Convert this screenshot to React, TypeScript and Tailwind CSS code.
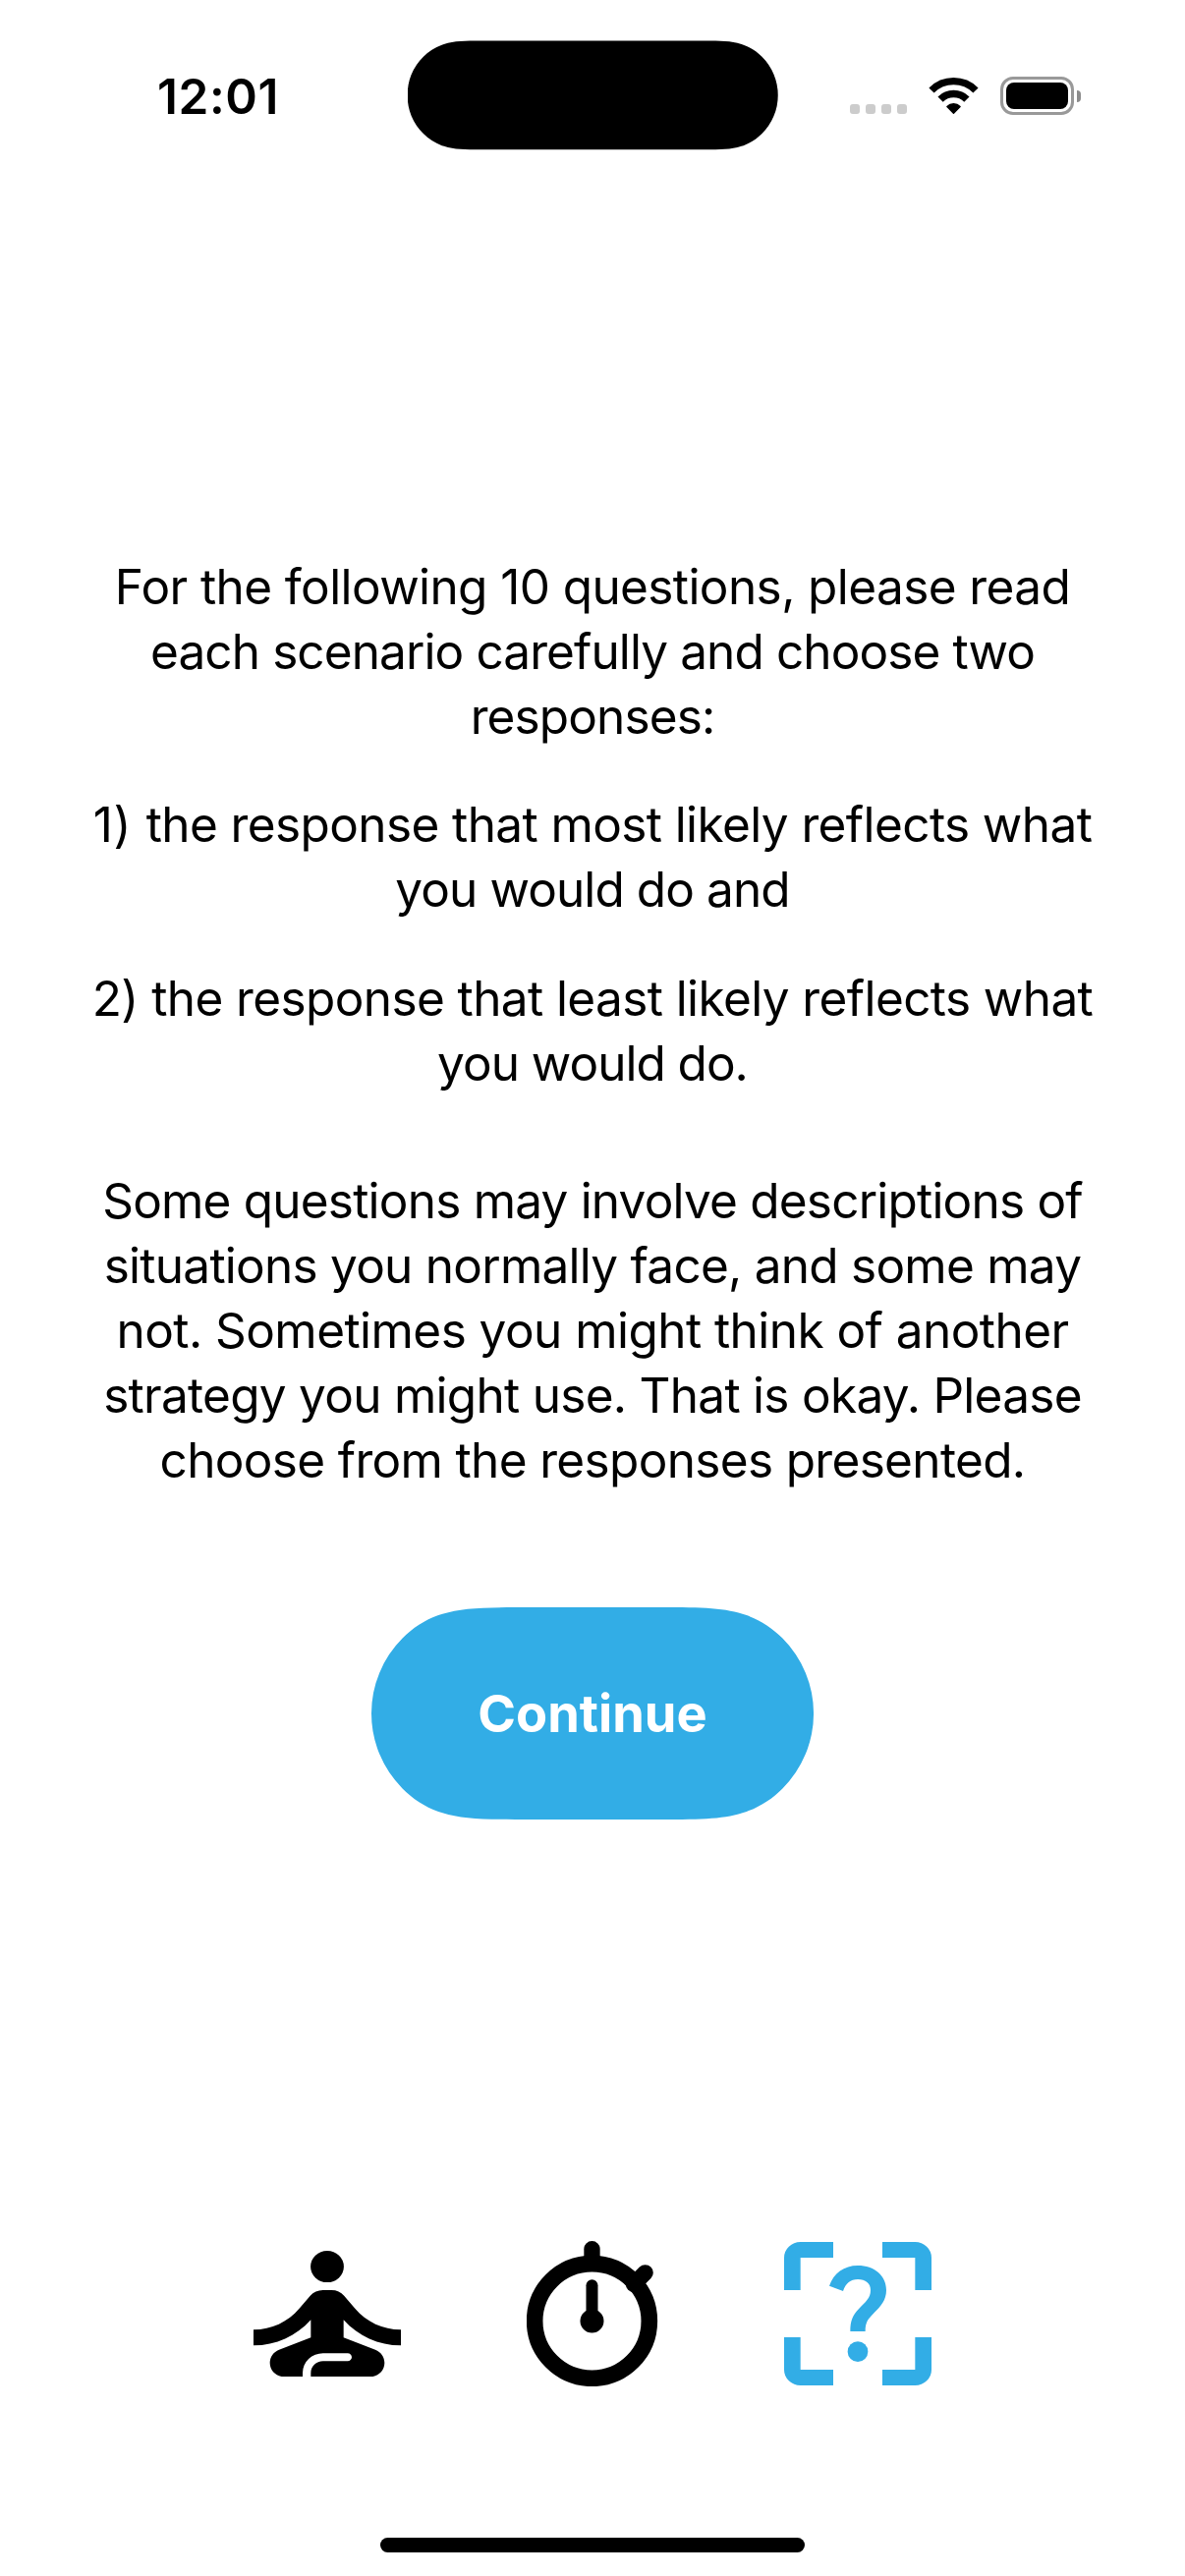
type Line = { text: string; tracking: string; marker?: string };

const INTRO: Line[] = [
  { text: "For the following 10 questions, please read", tracking: "tracking-[-0.595px]" },
  { text: "each scenario carefully and choose two", tracking: "tracking-[-0.895px]" },
  { text: "responses:", tracking: "tracking-[-0.87px]" },
];

const MOST: Line[] = [
  { marker: "1) ", text: "the response that most likely reflects what", tracking: "tracking-[-0.6px]" },
  { text: "you would do and", tracking: "tracking-[-0.9px]" },
];

const LEAST: Line[] = [
  { text: "2) the response that least likely reflects what", tracking: "tracking-[-0.6px]" },
  { text: "you would do.", tracking: "tracking-[-1px]" },
];

const NOTE: Line[] = [
  { text: "Some questions may involve descriptions of", tracking: "tracking-[-0.79px]" },
  { text: "situations you normally face, and some may", tracking: "tracking-[-0.746px]" },
  { text: "not. Sometimes you might think of another", tracking: "tracking-[-0.55px]" },
  { text: "strategy you might use. That is okay. Please", tracking: "tracking-[-0.72px]" },
  { text: "choose from the responses presented.", tracking: "tracking-[-0.66px]" },
];

function Paragraph({ lines, className = "" }: { lines: Line[]; className?: string }) {
  return (
    <p className={`text-center text-[49.5px] leading-[66px] whitespace-nowrap ${className}`}>
      {lines.map((line) => (
        <span key={line.text} className={`block ${line.tracking}`}>
          {line.marker && <span className="tracking-[0.6px]">{line.marker}</span>}
          {line.text}
        </span>
      ))}
    </p>
  );
}

function WifiIcon() {
  return (
    <svg className="h-[38px] w-[52px]" viewBox="-0.5 0 52 38" fill="none">
      <path d="M2.5 13 A31.85 31.85 0 0 1 47.5 13" stroke="#000" strokeWidth="7.3" />
      <path d="M11.6 22.1 A19 19 0 0 1 38.4 22.1" stroke="#000" strokeWidth="7.5" />
      <path
        d="M25 36.2 L18.4 29.5 A9.4 9.4 0 0 1 31.6 29.5 Z"
        fill="#000"
        stroke="#000"
        strokeWidth="1.4"
        strokeLinejoin="round"
      />
    </svg>
  );
}

function BatteryIcon() {
  return (
    <div className="flex items-center gap-[3px]">
      <div className="h-[39px] w-[75px] rounded-[13px] border-[3px] border-[#999] p-[3px]">
        <div className="h-full w-full rounded-[8px] bg-black" />
      </div>
      <div className="h-[12px] w-[4px] rounded-r-full bg-[#8c8c8c]" />
    </div>
  );
}

function StatusBar() {
  return (
    <header className="relative flex h-[172px] items-start">
      <time className="ml-[160px] mt-[68px] text-[49.5px] leading-[60px] font-semibold tracking-[0.57px]">
        12:01
      </time>
      <div className="absolute left-[414.7px] top-[41px] h-[112px] w-[377px] bg-black [clip-path:path('M0_55.9A55.4_55.4_0_0_1_16.2_16.7C21.4_11.4_27.8_7.3_35_4.65L37.1_4C48.1_0.5_58_0.5_75_0.5H302C319_0.5_328.9_0.5_339.9_4L342_4.65C349.2_7.3_355.6_11.4_360.8_16.7A55.4_55.4_0_0_1_360.8_95.1C355.6_100.4_349.2_104.5_342_107.15L339.9_107.8C328.9_111.3_319_111.3_302_111.3H75C58_111.3_48.1_111.3_37.1_107.8L35_107.15C27.8_104.5_21.4_100.4_16.2_95.1A55.4_55.4_0_0_1_0_55.9Z')]" />
      <div className="ml-auto mr-[106px] mt-[78px] flex h-[39px]">
        <div className="mt-[28px] mr-[22px] flex gap-[6px]">
          {[0, 1, 2, 3].map((i) => (
            <span key={i} className="size-[10px] rounded-[3px] bg-[#ccc]" />
          ))}
        </div>
        <div className="mt-[1px] mr-[21px]">
          <WifiIcon />
        </div>
        <BatteryIcon />
      </div>
    </header>
  );
}

function MeditationIcon() {
  return (
    <svg className="h-[128.3px] w-[150px]" viewBox="3 4 18 16" preserveAspectRatio="none" fill="currentColor">
      <ellipse cx="12" cy="6" rx="2.03" ry="2" />
      <path d="M21 16v-2c-2.24 0-4.16-.96-5.6-2.68l-1.34-1.6A1.98 1.98 0 0 0 12.53 9h-1.05c-.61 0-1.17.26-1.55.72l-1.34 1.6C7.16 13.04 5.24 14 3 14v2c2.77 0 5.19-1.17 7-3.25V15l-3.88 1.55c-.67.27-1.12.93-1.12 1.66C5 19.2 5.8 20 6.79 20H9v-.5a2.5 2.5 0 0 1 2.5-2.5h3c.28 0 .5.22.5.5s-.22.5-.5.5h-3c-.83 0-1.5.67-1.5 1.5v.5h7.21c.99 0 1.79-.8 1.79-1.79 0-.73-.45-1.39-1.12-1.66L14 15v-2.25c1.81 2.08 4.23 3.25 7 3.25z" />
    </svg>
  );
}

function StopwatchIcon() {
  return (
    <svg className="h-[148.3px] w-[133.3px]" viewBox="78 62 400 445" fill="none" stroke="currentColor">
      <circle cx="277.5" cy="306.5" r="175" strokeWidth="50" />
      <path d="M277.5 86.5V130" strokeWidth="49" strokeLinecap="round" />
      <path d="M440 159L405 194" strokeWidth="49" strokeLinecap="round" />
      <path d="M277.5 198V300" strokeWidth="36" strokeLinecap="round" />
      <circle cx="277.5" cy="306.5" r="36" fill="currentColor" stroke="none" />
    </svg>
  );
}

function QuestionFrameIcon() {
  return (
    <svg className="h-[146px] w-[150px]" viewBox="54 66 450 438" fill="currentColor">
      <path d="M54 213V114A50 48 0 0 1 104 66H204V114H104V213Z" />
      <path d="M504 213V114A50 48 0 0 0 454 66H354V114H454V213Z" />
      <path d="M54 357V456A50 48 0 0 0 104 504H204V456H104V357Z" />
      <path d="M504 357V456A50 48 0 0 1 454 504H354V456H454V357Z" />
      <path d="M192 200C205 162 237 138 279 138C330 138 366 169 366 213C366 244 349 263 327 284C309 302 302 312 302 339H256C256 306 263 290 283 269C303 248 318 238 318 213C318 192 303 180 279 180C257 180 242 192 234 216Z" />
      <circle cx="279" cy="401" r="31" />
    </svg>
  );
}

export default function App() {
  return (
    <div className="flex h-[2622px] w-[1206px] flex-col overflow-hidden bg-white font-['Inter',sans-serif] text-black">
      <StatusBar />

      <main className="flex flex-col items-center pt-[392px]">
        <Paragraph lines={INTRO} />
        <Paragraph lines={MOST} className="mt-[44px]" />
        <Paragraph lines={LEAST} className="mt-[45px]" />
        <Paragraph lines={NOTE} className="mt-[74px]" />

        <button className="mt-[117px] flex h-[216px] w-[450px] items-center justify-center bg-[#32ade6] text-[52.4px] leading-[64px] font-bold text-white [clip-path:path('M0_108A108_108_0_0_1_31.6_31.6C41.8_21.2_54.2_13.2_68.2_8.1L72.4_6.8C93.8_0_117.6_0_165_0H285C332.4_0_356.2_0_377.6_6.8L381.8_8.1C395.8_13.2_408.2_21.2_418.4_31.6A108_108_0_0_1_418.4_184.4C408.2_194.8_395.8_202.8_381.8_207.9L377.6_209.2C356.2_216_332.4_216_285_216H165C117.6_216_93.8_216_72.4_209.2L68.2_207.9C54.2_202.8_41.8_194.8_31.6_184.4A108_108_0_0_1_0_108Z')]">
          Continue
        </button>
      </main>

      <nav className="mt-auto flex h-[148px] items-center justify-center gap-[120px]">
        <div className="flex w-[150px] justify-center">
          <MeditationIcon />
        </div>
        <div className="flex w-[150px] justify-center">
          <StopwatchIcon />
        </div>
        <div className="flex w-[150px] justify-center text-[#32ade6]">
          <QuestionFrameIcon />
        </div>
      </nav>

      <div className="mt-[154px] mb-[24px] h-[15px] w-[432px] shrink-0 self-center rounded-full bg-black" />
    </div>
  );
}
